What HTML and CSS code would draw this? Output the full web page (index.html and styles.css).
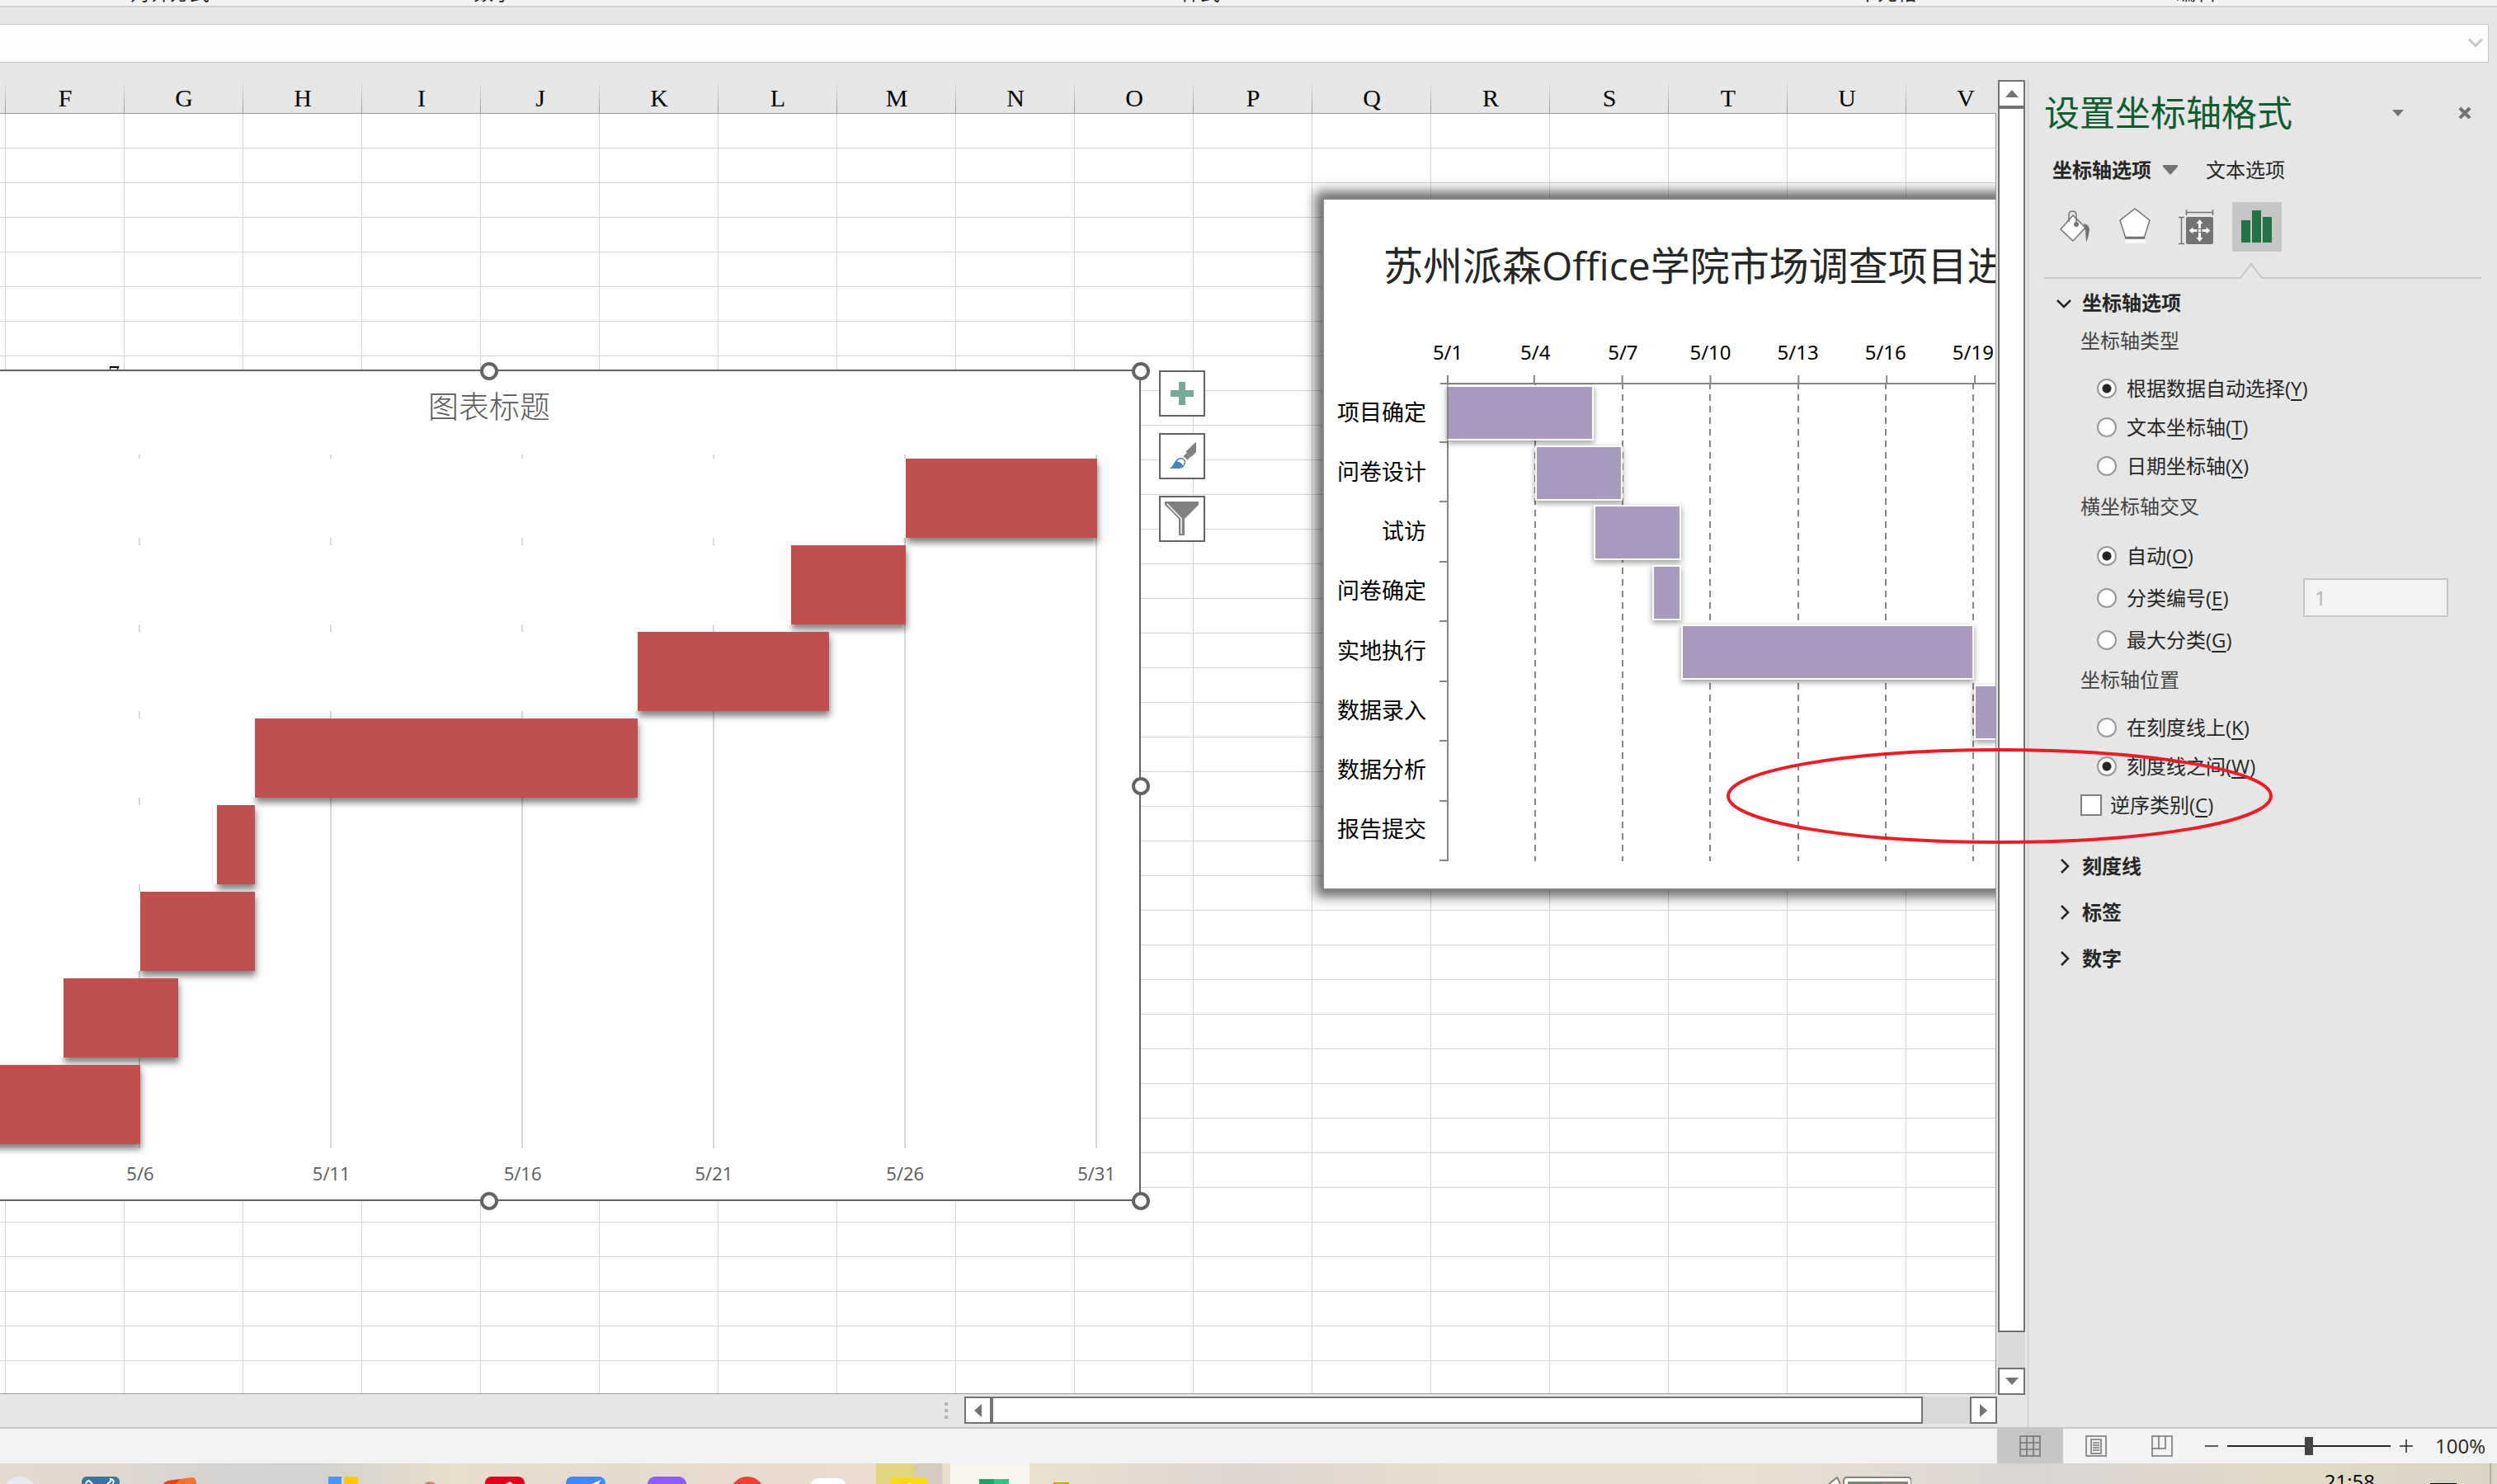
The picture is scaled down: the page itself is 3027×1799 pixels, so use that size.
FILE: index.html
```html
<!DOCTYPE html>
<html lang="zh-CN">
<head>
<meta charset="utf-8">
<title>设置坐标轴格式</title>
<meta name="viewport" content="width=device-width, initial-scale=1">
<link rel="stylesheet" href="styles.css">
</head>
<body>
<div class="app">
  <header class="ribbon">
    <span>对齐方式</span><span>数字</span><span>样式</span><span>单元格</span><span>编辑</span>
  </header>

  <div class="formula">
    <button class="plain" aria-label="展开编辑栏"><svg width="20" height="12" viewBox="0 0 20 12"><path d="M2 1.500L10 9.500L18 1.500" fill="none" stroke="#c6c6c6" stroke-width="3"/></svg></button>
  </div>

  <main class="work">
    <section class="book">
      <div class="cols">
        <span>F</span><span>G</span><span>H</span><span>I</span><span>J</span><span>K</span><span>L</span><span>M</span><span>N</span><span>O</span><span>P</span><span>Q</span><span>R</span><span>S</span><span>T</span><span>U</span><span>V</span>
      </div>
      <div class="cells">
        <span class="cell-value">7</span>

        <div class="chart chart-red">
          <h2>图表标题</h2>
          <div class="plot">
            <div class="lines"><i></i><i></i><i></i><i></i><i></i><i></i></div>
            <div class="row"><b style="width:83.333%"></b><em style="width:16.667%"></em></div>
            <div class="row"><b style="width:73.333%"></b><em style="width:10%"></em></div>
            <div class="row"><b style="width:60%"></b><em style="width:16.667%"></em></div>
            <div class="row"><b style="width:26.667%"></b><em style="width:33.333%"></em></div>
            <div class="row"><b style="width:23.333%"></b><em style="width:3.333%"></em></div>
            <div class="row"><b style="width:16.667%"></b><em style="width:10%"></em></div>
            <div class="row"><b style="width:10%"></b><em style="width:10%"></em></div>
            <div class="row"><em style="width:16.667%"></em></div>
          </div>
          <div class="axis"><span>5/6</span><span>5/11</span><span>5/16</span><span>5/21</span><span>5/26</span><span>5/31</span></div>
          <i class="handle top"></i><i class="handle corner"></i><i class="handle side"></i><i class="handle bottom"></i><i class="handle low"></i>
          <div class="tools">
            <button aria-label="图表元素"><svg width="52" height="52" viewBox="0 0 52 52"><path d="M22 12h8v10h10v8H30v10h-8V30H12v-8h10z" fill="#77a997"/></svg></button>
            <button aria-label="图表样式"><svg width="52" height="52" viewBox="0 0 52 52"><path d="M43 8.500V21l-6 6-6.500-6.500z" fill="#808080"/><path d="M32 22l4.500 4.500-4 4-5-4.500z" fill="#808080"/><path d="M10 41c7-2 6-13 15-12.500c6 2 6 12.500-4 12.500z" fill="#4a80bb"/><path d="M19 34c0-5 6-7 9-4c3 3 1 8-3 10" fill="#fff" stroke="#4a80bb" stroke-width="1.500"/><path d="M18 33c4-1 8 1 9 5l-6 3h-8z" fill="#4a80bb"/></svg></button>
            <button aria-label="图表筛选器"><svg width="52" height="52" viewBox="0 0 52 52"><path d="M5 5h41v4L29 26v20h-7V26L5 9z" fill="#808080"/><path d="M7.500 7.500L25 25.500V44" fill="none" stroke="#fff" stroke-width="1.500"/></svg></button>
          </div>
        </div>

        <div class="chart chart-purple">
          <h2>苏州派森Office学院市场调查项目进</h2>
          <div class="axis"><span>5/1</span><span>5/4</span><span>5/7</span><span>5/10</span><span>5/13</span><span>5/16</span><span>5/19</span></div>
          <div class="gantt">
            <div class="names"><span>项目确定</span><span>问卷设计</span><span>试访</span><span>问卷确定</span><span>实地执行</span><span>数据录入</span><span>数据分析</span><span>报告提交</span></div>
            <div class="plot">
              <div class="lines"><i></i><i></i><i></i><i></i><i></i><i></i></div>
              <div class="row"><em style="width:27.778%"></em></div>
              <div class="row"><em style="margin-left:16.667%;width:16.667%"></em></div>
              <div class="row"><em style="margin-left:27.778%;width:16.667%"></em></div>
              <div class="row"><em style="margin-left:38.889%;width:5.556%"></em></div>
              <div class="row"><em style="margin-left:44.444%;width:55.556%"></em></div>
              <div class="row"><em style="margin-left:100%;width:27.778%"></em></div>
              <div class="row"></div>
              <div class="row"></div>
            </div>
          </div>
        </div>
      </div>
      <div class="vbar">
        <button aria-label="向上滚动"><svg width="16" height="9" viewBox="0 0 16 9"><path d="M0 9L8 0l8 9z" fill="#737373"/></svg></button>
        <div class="thumb"></div><div class="track"></div>
        <button aria-label="向下滚动"><svg width="16" height="9" viewBox="0 0 16 9"><path d="M0 0h16L8 9z" fill="#737373"/></svg></button>
      </div>
      <div class="foot">
        <div class="grip"><i></i><i></i><i></i></div>
        <div class="hbar">
          <button aria-label="向左滚动"><svg width="9" height="16" viewBox="0 0 9 16"><path d="M9 0v16L0 8z" fill="#737373"/></svg></button>
          <div class="thumb"></div><div class="track"></div>
          <button aria-label="向右滚动"><svg width="9" height="16" viewBox="0 0 9 16"><path d="M0 0v16l9-8z" fill="#737373"/></svg></button>
        </div>
      </div>
    </section>

    <aside class="pane">
      <div class="pane-head">
        <h1>设置坐标轴格式</h1>
        <button class="plain" aria-label="任务窗格选项"><svg width="14" height="8" viewBox="0 0 14 8"><path d="M0 0h14L7 8z" fill="#737373"/></svg></button>
        <button class="plain close" aria-label="关闭"><svg width="16" height="16" viewBox="0 0 16 16"><path d="M2 2l12 12M14 2L2 14" stroke="#737373" stroke-width="4"/></svg></button>
      </div>
      <div class="tabs">
        <button class="plain on">坐标轴选项<svg width="18" height="12" viewBox="0 0 18 12"><path d="M0 0h18v2L9 12 0 2z" fill="#737373"/></svg></button>
        <button class="plain">文本选项</button>
      </div>
      <div class="kinds">
        <button class="plain" aria-label="填充与线条"><svg width="44" height="48" viewBox="0 0 44 48"><path d="M21 10L36 25 21 41 6 27z" fill="#fff" stroke="#737373" stroke-width="1.500"/><path d="M16 18V9q0-4 4.500-4T25 10v10" fill="none" stroke="#737373" stroke-width="1.500"/><circle cx="25" cy="21" r="3" fill="#737373"/><path d="M34 20q7 1 7 8q-1 8-4 15l-1-14z" fill="#737373"/></svg></button>
        <button class="plain" aria-label="效果"><svg width="44" height="48" viewBox="0 0 44 48"><path d="M22 2L40 16 33 38H11L4 16z" fill="#fff" stroke="#737373" stroke-width="1.500"/><path d="M11 37h23" stroke="#737373" stroke-width="2.500"/><path d="M11 39h23l2 5H9z" fill="#f8f8f8"/></svg></button>
        <button class="plain" aria-label="大小与属性"><svg width="44" height="48" viewBox="0 0 44 48"><rect x="10" y="12" width="33" height="33" rx="2" fill="#737373"/><path d="M10.500 3v7M42.500 3v7M10.500 6.500h32M1 12.500h7M1 44.500h7M4.500 12.500v32" stroke="#737373" stroke-width="1.500" fill="none"/><path d="M26.500 15l4 5h-2.500v6h-3v-6h-2.500zM26.500 42l4-5h-2.500v-6h-3v6h-2.500zM13.500 28.500l5-4v2.500h5v3h-5v2.500zM39.500 28.500l-5-4v2.500h-5v3h5v2.500z" fill="#fff"/><rect x="25" y="27" width="3" height="3" fill="#fff"/></svg></button>
        <button class="plain on" aria-label="坐标轴选项"><svg width="44" height="48" viewBox="0 0 44 48"><path d="M3 16h11v27H3zM16 4h11v39H16zM29 12h11v31H29z" fill="#217346"/></svg></button>
      </div>
      <div class="rule"><i></i><svg width="26" height="20" viewBox="0 0 26 20"><path d="M0 19L13 2l13 17" fill="none" stroke="#c6c6c6" stroke-width="2"/></svg><i></i></div>

      <button class="plain section first"><svg width="24" height="24" viewBox="0 0 24 24"><path d="M4 9l8 8 8-8" fill="none" stroke="#262626" stroke-width="2.500"/></svg>坐标轴选项</button>
      <fieldset>
        <legend>坐标轴类型</legend>
        <label><input type="radio" name="kind" checked><span>根据数据自动选择(<u>Y</u>)</span></label>
        <label><input type="radio" name="kind"><span>文本坐标轴(<u>T</u>)</span></label>
        <label><input type="radio" name="kind"><span>日期坐标轴(<u>X</u>)</span></label>
      </fieldset>
      <fieldset class="cross">
        <legend>横坐标轴交叉</legend>
        <label><input type="radio" name="cross" checked><span>自动(<u>O</u>)</span></label>
        <div class="pair"><label><input type="radio" name="cross"><span>分类编号(<u>E</u>)</span></label><input class="num" type="text" value="1" disabled aria-label="分类编号"></div>
        <label><input type="radio" name="cross"><span>最大分类(<u>G</u>)</span></label>
      </fieldset>
      <fieldset>
        <legend>坐标轴位置</legend>
        <label><input type="radio" name="place"><span>在刻度线上(<u>K</u>)</span></label>
        <label><input type="radio" name="place" checked><span>刻度线之间(<u>W</u>)</span></label>
        <label class="check"><input type="checkbox"><span>逆序类别(<u>C</u>)</span></label>
      </fieldset>
      <div class="more">
        <button class="plain section"><svg width="24" height="24" viewBox="0 0 24 24"><path d="M9 4l8 8-8 8" fill="none" stroke="#262626" stroke-width="2.500"/></svg>刻度线</button>
        <button class="plain section"><svg width="24" height="24" viewBox="0 0 24 24"><path d="M9 4l8 8-8 8" fill="none" stroke="#262626" stroke-width="2.500"/></svg>标签</button>
        <button class="plain section"><svg width="24" height="24" viewBox="0 0 24 24"><path d="M9 4l8 8-8 8" fill="none" stroke="#262626" stroke-width="2.500"/></svg>数字</button>
      </div>
      <svg class="mark" width="664" height="118" viewBox="0 0 664 118"><ellipse cx="332" cy="59" rx="329" ry="56" fill="none" stroke="#ee1c25" stroke-width="4"/></svg>
    </aside>
  </main>

  <footer class="status">
    <button class="plain view on" aria-label="普通"><svg width="26" height="26" viewBox="0 0 26 26"><path d="M1 1h24v24H1zM1 9h24M1 17h24M9 1v24M17 1v24" fill="none" stroke="#737373" stroke-width="1.500"/></svg></button>
    <button class="plain view" aria-label="页面布局"><svg width="26" height="26" viewBox="0 0 26 26"><path d="M1 1h24v24H1zM7 5h12v17H7zM9 9h8M9 12h8M9 15h8M9 18h8" fill="none" stroke="#737373" stroke-width="1.500"/></svg></button>
    <button class="plain view" aria-label="分页预览"><svg width="26" height="26" viewBox="0 0 26 26"><path d="M1 1h24v24H1zM1 16h16V1M9 1v15" fill="none" stroke="#737373" stroke-width="1.500"/></svg></button>
    <button class="plain step" aria-label="缩小"><svg width="16" height="16" viewBox="0 0 16 16"><path d="M0 8h16" stroke="#262626" stroke-width="1.500"/></svg></button>
    <input class="zoom" type="range" min="0" max="100" value="50" aria-label="缩放">
    <button class="plain step" aria-label="放大"><svg width="16" height="16" viewBox="0 0 16 16"><path d="M0 8h16M8 0v16" stroke="#262626" stroke-width="1.500"/></svg></button>
    <button class="plain percent">100%</button>
  </footer>

  <div class="taskbar">
    <svg class="apps" width="1320" height="25" viewBox="0 0 1320 25">
      <rect x="1062" width="47" height="25" fill="#e0d480"/><rect x="1109" width="33" height="25" fill="#d6cabe"/><rect x="1152" width="96" height="25" fill="#f8f3ed"/>
      <circle cx="24" cy="36" r="20" fill="#e9ebf0"/>
      <rect x="99" y="16" width="46" height="40" rx="6" fill="#3776a5"/><path d="M104 25q1-4 4-4l4 4M130 25l4-3v-3q5 0 3 6" fill="none" stroke="#fff" stroke-width="2"/>
      <path d="M198 25q2-3 6-4l29-4q5 0 5 8z" fill="#f0732c"/><path d="M198 25q2-3 6-4l14-2-5 6z" fill="#e8420f"/>
      <rect x="398" y="16" width="16" height="9" fill="#4f93ff"/><rect x="417" y="16" width="17" height="9" fill="#ffc609"/>
      <circle cx="521" cy="32" r="10" fill="#ef775b"/>
      <rect x="588" y="16" width="48" height="40" rx="8" fill="#df001b"/><path d="M613 25l5-3 4 3z" fill="#fff"/>
      <rect x="686" y="16" width="48" height="40" rx="8" fill="#4187ff"/><path d="M717 25l12-5-4 5z" fill="#fff"/>
      <rect x="785" y="16" width="47" height="40" rx="9" fill="#8d5cff"/>
      <circle cx="906" cy="37" r="21" fill="#ea4335"/>
      <rect x="983" y="18" width="42" height="40" rx="9" fill="#fff"/>
      <rect x="1079" y="17" width="46" height="40" rx="5" fill="#f7d914"/><rect x="1100" y="24" width="4" height="1" fill="#fff"/>
      <rect x="1187" y="19" width="18" height="6" fill="#21a366"/><rect x="1205" y="19" width="18" height="6" fill="#33c481"/>
      <rect x="1277" y="23" width="19" height="2" fill="#dc9c08"/>
    </svg>
    <svg class="power" width="104" height="25" viewBox="0 0 104 25"><path d="M4 25L14 17l4 8" fill="#fff" stroke="#8b8177" stroke-width="2"/><rect x="22" y="17" width="82" height="20" rx="4" fill="#fff" stroke="#8b8177" stroke-width="2"/><rect x="27" y="22" width="73" height="3" fill="#8b8177"/><rect x="27" y="24" width="41" height="1" fill="#15a34a"/></svg>
    <time>21:58</time>
    <i class="notice"></i>
    <i class="desk"></i>
  </div>
</div>
</body>
</html>
```
FILE: styles.css
```css
* { box-sizing: border-box; }
body {
  margin: 0;
  background: #e6e6e6;
  color: #262626;
  font: 24px/32px "Open Sans", "Noto Sans CJK SC", sans-serif;
}
h1, h2 { margin: 0; font-weight: 400; }
i, em { display: block; font-style: normal; }
svg { display: block; flex: none; }
button { font: inherit; color: inherit; padding: 0; }
.plain { border: 0; background: none; display: flex; align-items: center; }

.app { height: 100vh; display: flex; flex-direction: column; overflow: hidden; }

/* ribbon group captions, scrolled almost out of view */
.ribbon {
  display: grid;
  grid-template-columns: 412fr 372fr 1342fr 324fr 424fr 153fr;
  align-content: end;
  flex: none;
  height: 9px;
  overflow: hidden;
  background: #f3f3f3;
  border-bottom: 2px solid #d0d0d0;
  text-align: center;
}
.formula {
  flex: none;
  display: flex;
  justify-content: flex-end;
  height: 47px;
  margin: 20px 10px 20px 0;
  padding: 0 5px 2px 0;
  background: #fdfdfd;
  border: 1px solid #c6c6c6;
  border-left: 0;
}

.work { flex: 1; min-height: 0; display: flex; }

/* worksheet */
.book {
  flex: 1;
  min-width: 0;
  display: grid;
  grid-template-columns: minmax(0, 1fr) 38px;
  grid-template-rows: 42px minmax(0, 1fr) 40px;
}
.cols {
  display: flex;
  overflow: hidden;
  padding-left: 7px;
  border-bottom: 1px solid #999;
  background: linear-gradient(#e6e6e6, #999) no-repeat 6px 0 / 1px 100%;
  color: #000;
  font: 30px/46px "Liberation Serif", serif;
  text-align: center;
}
.cols span {
  flex: 0 0 144px;
  background: linear-gradient(#e6e6e6, #999) no-repeat 100% 0 / 1px 100%;
}
.cells {
  position: relative;
  overflow: hidden;
  border-right: 1px solid #999;
  border-bottom: 1px solid #999;
  background:
    linear-gradient(90deg, transparent 143px, #d4d4d4 143px) -137px 0 / 144px 42px,
    linear-gradient(#fff 41px, #d4d4d4 41px) 0 0 / 144px 42px;
}
.cell-value {
  position: absolute;
  left: 7px;
  top: 294px;
  width: 138px;
  color: #000;
  font: 28px/41px "Liberation Serif", serif;
  text-align: right;
}

.chart { position: absolute; background: #fff; }
.plot { position: relative; display: grid; grid-template-rows: repeat(8, minmax(0, 1fr)); }
.lines { position: absolute; inset: 0; display: grid; grid-template-columns: repeat(6, minmax(0, 1fr)); }
.row { position: relative; display: flex; }
.row em { flex: none; }

.chart-red {
  left: -197px;
  top: 310px;
  width: 1580px;
  height: 1008px;
  border: 2px solid #636363;
  color: #595959;
}
.chart-red h2 { padding-top: 18px; font-size: 37px; line-height: 50px; font-weight: 300; text-align: center; }
.chart-red .plot { width: 1392px; height: 841px; margin: 33px 0 0 133px; }
.chart-red .lines i { border-right: 2px solid #d9d9d9; }
.chart-red .row { align-items: center; }
.chart-red .row b { height: 96px; background: #fff; z-index: 1; }
.chart-red .row em { height: 96px; background: #c0504d; box-shadow: 1px 6px 8px rgba(0, 0, 0, .5); }
.chart-red .axis {
  display: grid;
  grid-template-columns: repeat(6, minmax(0, 1fr));
  width: 1391px;
  margin: 14px 0 0 249px;
  font-size: 22px;
  text-align: center;
}
.handle {
  position: absolute;
  width: 22px;
  height: 22px;
  border: 4px solid #636363;
  border-radius: 50%;
  background: #fff;
}
.top { left: 777px; top: -11px; }
.corner { right: -13px; top: -11px; }
.side { right: -13px; top: 492px; }
.bottom { left: 777px; bottom: -13px; }
.low { right: -13px; bottom: -13px; }
.tools { position: absolute; left: 1600px; top: -1px; display: grid; gap: 20px; }
.tools button { width: 56px; height: 56px; border: 2px solid #636363; background: #fff; }

.chart-purple {
  left: 1603px;
  top: 102px;
  width: 900px;
  height: 839px;
  border: 2px solid #868686;
  box-shadow: 0 0 14px 8px rgba(0, 0, 0, .6);
}
.chart-purple h2 { padding: 44px 0 0 72px; font-size: 48px; line-height: 72px; white-space: nowrap; }
.chart-purple .axis {
  display: grid;
  grid-template-columns: repeat(7, minmax(0, 1fr));
  width: 743px;
  margin: 53px 0 0 97px;
  color: #000;
  font: 24px/32px "Noto Sans", sans-serif;
  text-align: center;
}
.gantt { display: flex; margin-top: 21px; }
.names {
  display: grid;
  grid-template-rows: repeat(8, minmax(0, 1fr));
  align-items: center;
  width: 124px;
  height: 577px;
  color: #000;
  font-size: 27px;
  text-align: right;
}
.chart-purple .plot { width: 639px; height: 580px; margin-left: 25px; }
.chart-purple .lines { border-left: 2px solid #868686; }
.chart-purple .lines::before {
  content: "";
  position: absolute;
  left: -10px;
  top: 0;
  width: 760px;
  height: 2px;
  background: #868686;
}
.chart-purple .lines::after {
  content: "";
  position: absolute;
  left: -2px;
  top: -9px;
  width: 641px;
  height: 9px;
  background:
    linear-gradient(#868686, #868686) no-repeat 0 0 / 2px 9px,
    linear-gradient(90deg, transparent 98.2%, #868686 98.2%) 0 0 / 16.667% 9px;
}
.chart-purple .lines i { background: repeating-linear-gradient(#868686 0 8px, #fff 8px 14px) no-repeat 100% 0 / 2px 100%; }
.chart-purple .row::before {
  content: "";
  position: absolute;
  left: -9px;
  bottom: 0;
  width: 9px;
  height: 2px;
  background: #868686;
}
.chart-purple .row em {
  margin-top: 3px;
  height: 67px;
  border: 2px solid #fff;
  background: #a99bbd;
  box-shadow: 0 3px 7px rgba(0, 0, 0, .4);
}
.chart-purple .plot .row:nth-child(2) em { border-left-color: #868686; }

/* scroll bars */
.vbar { grid-column: 2; grid-row: 1 / 3; display: flex; flex-direction: column; width: 33px; margin: 1px 0 -1px 2px; }
.hbar { display: flex; height: 33px; }
.vbar button, .hbar button {
  flex: none;
  display: grid;
  place-items: center;
  width: 33px;
  height: 33px;
  background: #fff;
  border: 2px solid #737373;
}
.thumb { flex: 1; background: #fff; border: 2px solid #737373; }
.vbar .track { flex: 0 0 43px; background: #d9d9d9; }
.hbar .track { flex: 0 0 57px; background: #d9d9d9; }
.foot { grid-column: 1 / 3; display: grid; grid-template-columns: minmax(0, 1169fr) minmax(0, 1252fr); padding: 3px 37px 0 0; }
.grip { display: grid; gap: 4px; align-content: center; justify-content: end; padding: 0 20px 4px 0; }
.grip i { width: 4px; height: 4px; background: #b5b5b5; }

/* format pane */
.pane { position: relative; flex: none; width: 569px; margin-top: 1px; padding: 10px 19px 0; border-left: 1px solid #c0c0c0; }
.pane-head { display: flex; align-items: center; }
.pane-head h1 { flex: 1; color: #0f5c2f; font-size: 43px; line-height: 60px; }
.close { margin: 0 12px 0 66px; }
.tabs { display: flex; gap: 34px; height: 40px; margin: 19px 0 0 10px; }
.tabs .on { gap: 14px; font-weight: 700; }
.kinds { display: flex; gap: 14px; margin: 19px 0 0 6px; }
.kinds button { width: 60px; height: 60px; justify-content: center; }
.kinds .on { background: #c6c6c6; }
.rule { display: flex; align-items: flex-end; margin-top: 13px; }
.rule i { flex: 1; height: 2px; background: #c6c6c6; }
.rule i:first-child { flex: 0 0 238px; }
.section { gap: 10px; height: 56px; padding-left: 12px; font-weight: 700; }
.first { height: 32px; margin: 13px 0 14px; }
.more { margin-top: 23px; }
fieldset { margin: 0 0 10px; padding: 0 0 0 64px; border: 0; }
legend { margin: 0 0 18px -20px; padding: 0; color: #444; }
label { display: flex; align-items: center; gap: 12px; height: 47px; }
.cross { margin-bottom: 7px; }
.cross label { height: 51px; }
.pair { display: flex; align-items: center; justify-content: space-between; padding-right: 40px; }
.check { gap: 10px; margin-left: -20px; }
input { margin: 0; }
input[type="radio"], input[type="checkbox"] {
  appearance: none;
  flex: none;
  width: 24px;
  height: 24px;
  border: 2px solid #979797;
  border-radius: 50%;
  background: #fff;
}
input[type="radio"]:checked { background: radial-gradient(circle, #262626 5px, #fff 6px); }
input[type="checkbox"] { width: 26px; height: 26px; border-color: #808080; border-radius: 0; }
u { text-decoration-thickness: 2px; text-underline-offset: 4px; }
.num { width: 176px; height: 47px; padding: 0 12px; border: 2px solid #c6c6c6; background: #f2f2f2; color: #b1b1b1; font: inherit; }
.mark { position: absolute; left: -367px; top: 809px; z-index: 2; pointer-events: none; }

/* status bar */
.status {
  flex: none;
  display: flex;
  align-items: center;
  justify-content: flex-end;
  height: 44px;
  padding-right: 14px;
  border-top: 2px solid #c6c6c6;
  background: #f3f3f3;
}
.view { width: 80px; height: 42px; justify-content: center; }
.view.on { background: #c6c6c6; }
.step { margin: 0 11px; }
.status .view + .step { margin-left: 12px; }
.zoom { appearance: none; width: 198px; height: 22px; background: linear-gradient(#262626, #262626) no-repeat 0 50% / 100% 2px; }
.zoom::-webkit-slider-thumb { appearance: none; width: 10px; height: 22px; background: #444; }
.percent { margin-left: 16px; }

/* desktop task bar */
.taskbar {
  flex: none;
  display: flex;
  height: 25px;
  overflow: hidden;
  background: linear-gradient(90deg, #e4d8cf 0, #e2d8cf 4%, #d3d2d2 9%, #d4d2d0 13%, #e8deca 18%, #e6dacf 25%, #eadccd 31%, #ebdfcd 42%, #e2d8d0 47%, #ddd5d0 50%, #e9ddcd 58%, #ebdfd1 70%, #d9d5d3 82%, #e2d8c4 92%, #d8d4c6 100%);
}
.power { margin-left: auto; }
time { margin: 6px 67px 0 501px; color: #000; }
.notice { width: 32px; height: 1px; margin-top: 24px; background: #000; }
.desk { width: 2px; margin: 0 7px 0 40px; background: #b5ac9f; }
```
